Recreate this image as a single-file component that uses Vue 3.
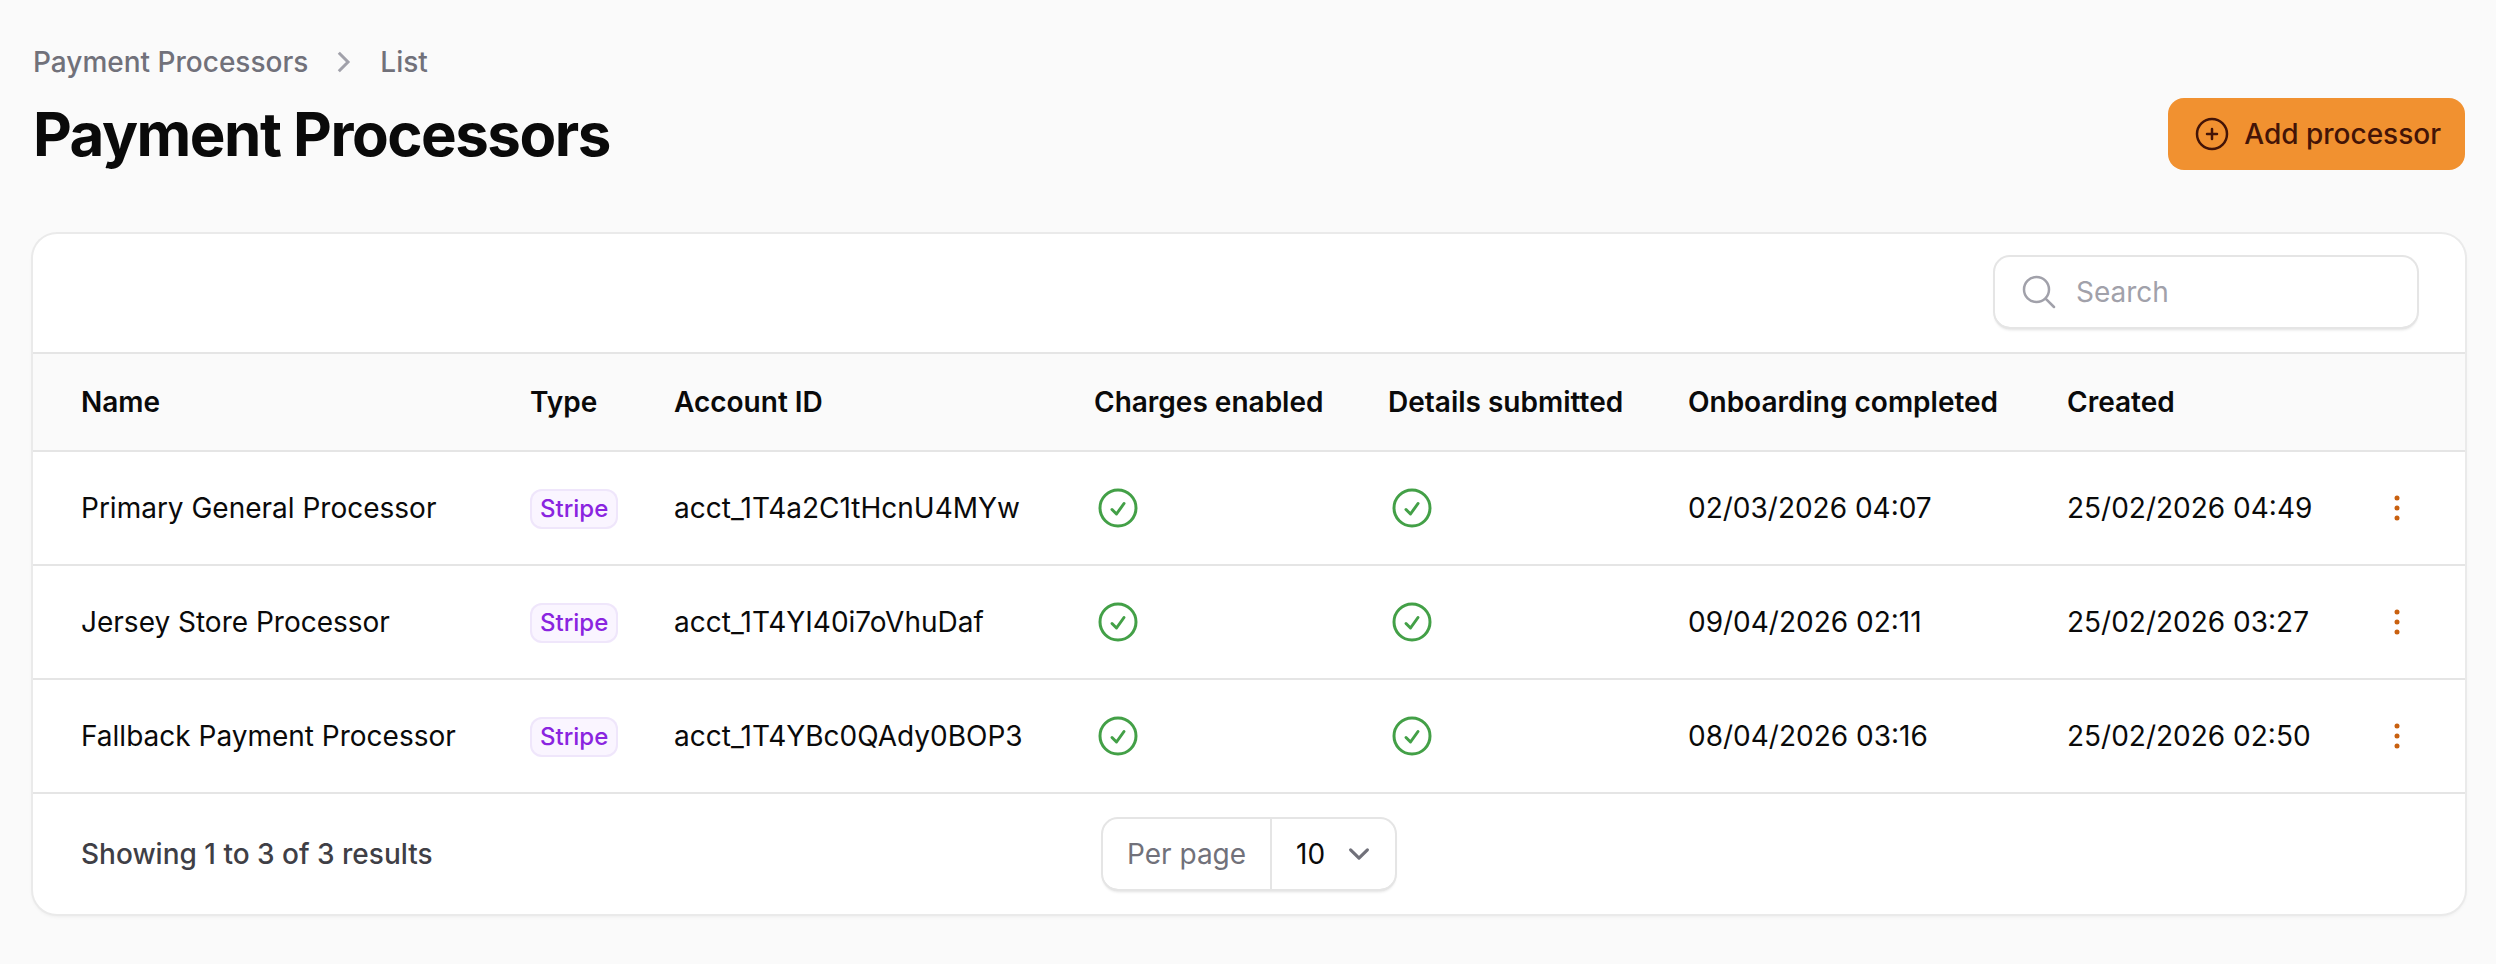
<script setup>
const rows = [
  { name: 'Primary General Processor', acct: 'acct_1T4a2C1tHcnU4MYw', onboarded: '02/03/2026 04:07', created: '25/02/2026 04:49' },
  { name: 'Jersey Store Processor', acct: 'acct_1T4YI40i7oVhuDaf', onboarded: '09/04/2026 02:11', created: '25/02/2026 03:27' },
  { name: 'Fallback Payment Processor', acct: 'acct_1T4YBc0QAdy0BOP3', onboarded: '08/04/2026 03:16', created: '25/02/2026 02:50' },
]
</script>

<template>
  <div class="page">
    <nav class="crumbs">
      <span>Payment Processors</span>
      <svg class="crumb-sep" viewBox="0 0 20 20" fill="none"><path d="M7.4 5.4 12 10l-4.6 4.6" /></svg>
      <span>List</span>
    </nav>
    <header class="head">
      <h1>Payment Processors</h1>
      <button class="add" type="button">
        <svg viewBox="0 0 24 24" fill="none"><path d="M12 9v6m3-3H9m12 0a9 9 0 1 1-18 0 9 9 0 0 1 18 0Z" /></svg>
        Add processor
      </button>
    </header>

    <section class="card">
      <div class="toolbar">
        <label class="search">
          <svg viewBox="0 0 24 24" fill="none"><path d="m21 21-5.197-5.197m0 0A7.5 7.5 0 1 0 5.196 5.196a7.5 7.5 0 0 0 10.607 10.607Z" /></svg>
          <span>Search</span>
        </label>
      </div>
      <table>
        <colgroup>
          <col class="c-name" /><col class="c-type" /><col class="c-acct" /><col class="c-charges" />
          <col class="c-details" /><col class="c-onb" /><col class="c-created" /><col />
        </colgroup>
        <thead>
          <tr>
            <th>Name</th><th>Type</th><th>Account ID</th><th>Charges enabled</th>
            <th>Details submitted</th><th>Onboarding completed</th><th>Created</th><th></th>
          </tr>
        </thead>
        <tbody>
          <tr v-for="row in rows" :key="row.acct">
            <td>{{ row.name }}</td>
            <td><span class="badge">Stripe</span></td>
            <td>{{ row.acct }}</td>
            <td>
              <svg class="ok" viewBox="0 0 24 24" fill="none"><path d="M9 12.75 11.25 15 15 9.75M21 12a9 9 0 1 1-18 0 9 9 0 0 1 18 0Z" /></svg>
            </td>
            <td>
              <svg class="ok" viewBox="0 0 24 24" fill="none"><path d="M9 12.75 11.25 15 15 9.75M21 12a9 9 0 1 1-18 0 9 9 0 0 1 18 0Z" /></svg>
            </td>
            <td>{{ row.onboarded }}</td>
            <td>{{ row.created }}</td>
            <td>
              <svg class="more" viewBox="0 0 24 24"><circle cx="12" cy="6" r="1.5" /><circle cx="12" cy="12" r="1.5" /><circle cx="12" cy="18" r="1.5" /></svg>
            </td>
          </tr>
        </tbody>
      </table>
      <footer class="foot">
        <span class="count">Showing 1 to 3 of 3 results</span>
        <div class="perpage">
          <span class="pp-label">Per page</span>
          <span class="pp-value">
            10
            <svg viewBox="0 0 20 20" fill="none"><path d="m6 8 4 4 4-4" /></svg>
          </span>
        </div>
        <span></span>
      </footer>
    </section>
  </div>
</template>

<style>
html, body { margin: 0; background: #fafafa; }
</style>

<style scoped>
.page {
  box-sizing: border-box;
  min-height: 964px;
  padding: 42px 31px 0 33px;
  background: #fafafa;
  font-family: Inter, "Liberation Sans", sans-serif;
  font-size: 28px;
  line-height: 40px;
  color: #0a0a0a;
}
.crumbs {
  display: flex;
  align-items: center;
  gap: 16px;
  font-weight: 500;
  color: #71717a;
}
.crumb-sep { width: 40px; height: 40px; }
.crumb-sep path { stroke: #a1a1aa; stroke-width: 1.5; }
.head {
  display: flex;
  align-items: center;
  justify-content: space-between;
  margin-top: 16px;
}
h1 {
  margin: 0;
  font-size: 60px;
  line-height: 72px;
  font-weight: 700;
  letter-spacing: -1.5px;
  color: #0a0a0a;
}
.add {
  display: flex;
  align-items: center;
  gap: 12px;
  height: 72px;
  padding: 0 24px;
  border: 0;
  border-radius: 16px;
  background: #f19130;
  color: #431407;
  font: 500 28px/40px Inter, "Liberation Sans", sans-serif;
}
.add svg { width: 40px; height: 40px; }
.add path { stroke: #431407; stroke-width: 1.5; stroke-linecap: round; stroke-linejoin: round; }
.card {
  margin-top: 64px;
  background: #fff;
  border-radius: 24px;
  box-shadow: 0 0 0 2px #eaeaea, 0 2px 4px rgba(0, 0, 0, 0.08);
  overflow: hidden;
}
.toolbar {
  display: flex;
  justify-content: flex-end;
  padding: 23px 48px 25px 0;
  border-bottom: 2px solid #e5e5e5;
}
.search {
  box-sizing: border-box;
  display: flex;
  align-items: center;
  gap: 17px;
  width: 422px;
  height: 70px;
  padding-left: 24px;
  border-radius: 15px;
  box-shadow: 0 0 0 2px #e5e5e5, 0 3px 3px rgba(0, 0, 0, 0.12);
  color: #a1a1aa;
}
.search svg { width: 40px; height: 40px; }
.search path { stroke: #a1a1aa; stroke-width: 1.5; stroke-linecap: round; stroke-linejoin: round; }
table {
  width: 100%;
  table-layout: fixed;
  border-collapse: collapse;
}
.c-name { width: 497px; }
.c-type { width: 144px; }
.c-acct { width: 420px; }
.c-charges { width: 294px; }
.c-details { width: 300px; }
.c-onb { width: 379px; }
.c-created { width: 290px; }
th, td {
  padding: 0;
  text-align: left;
  white-space: nowrap;
}
th:first-child, td:first-child { padding-left: 48px; }
th {
  height: 96px;
  background: #fafafa;
  font-weight: 600;
  border-bottom: 2px solid #e5e5e5;
}
td {
  height: 112px;
  border-bottom: 2px solid #e5e5e5;
}
.badge {
  box-sizing: border-box;
  display: inline-flex;
  align-items: center;
  height: 40px;
  padding: 0 10px;
  border-radius: 12px;
  background: #faf5ff;
  box-shadow: inset 0 0 0 2px #efe6fb;
  color: #8a24e0;
  font-size: 24px;
  font-weight: 500;
  line-height: 32px;
  vertical-align: middle;
}
.ok { display: block; width: 48px; height: 48px; }
.ok path { stroke: #43a047; stroke-width: 1.5; stroke-linecap: round; stroke-linejoin: round; }
.more { display: block; width: 40px; height: 40px; margin-left: 20px; fill: #c9600f; }
.foot {
  display: grid;
  grid-template-columns: 1fr auto 1fr;
  align-items: center;
  height: 120px;
  padding: 0 48px;
}
.count { font-weight: 500; color: #3f3f46; }
.perpage {
  display: flex;
  align-items: center;
  height: 70px;
  border-radius: 15px;
  box-shadow: 0 0 0 2px #e5e5e5, 0 3px 3px rgba(0, 0, 0, 0.12);
}
.pp-label {
  box-sizing: border-box;
  width: 169px;
  height: 100%;
  padding-left: 24px;
  line-height: 70px;
  color: #71717a;
  border-right: 2px solid #e5e5e5;
}
.pp-value {
  display: flex;
  align-items: center;
  box-sizing: border-box;
  width: 123px;
  padding-left: 24px;
  gap: 13px;
}
.pp-value svg { width: 42px; height: 42px; }
.pp-value path { stroke: #71717a; stroke-width: 1.5; stroke-linecap: round; stroke-linejoin: round; }
</style>
